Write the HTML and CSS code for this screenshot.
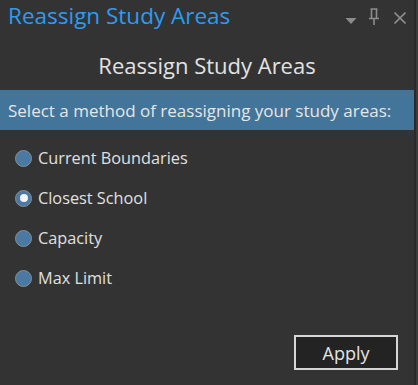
FILE: index.html
```html
<!DOCTYPE html>
<html>
<head>
<meta charset="utf-8">
<link rel="stylesheet" href="styles.css">
</head>
<body>
<div class="pane">
  <div class="main">
    <div class="titlebar">
      <span class="title">Reassign Study Areas</span>
      <div class="tools">
        <svg class="ico tri" width="12" height="12" viewBox="0 0 12 12"><path d="M0.5 4 L11.5 4 L6 10 Z" fill="#8c8c8c"/></svg>
        <svg class="ico pin" width="12" height="17" viewBox="0 0 12 17"><path d="M2.5 1 H9.5 M3.5 1 V10 M8.5 1 V10 M1 10.5 H11 M6 11 V17" stroke="#8c8c8c" stroke-width="1.6" fill="none"/></svg>
        <svg class="ico close" width="12" height="12" viewBox="0 0 12 12"><path d="M0.5 0.5 L11.5 11.5 M11.5 0.5 L0.5 11.5" stroke="#8c8c8c" stroke-width="1.6"/></svg>
      </div>
    </div>
    <div class="heading">Reassign Study Areas</div>
    <div class="band">Select a method of reassigning your study areas:</div>
    <div class="options">
      <label class="opt"><span class="radio"></span>Current Boundaries</label>
      <label class="opt"><span class="radio checked"></span>Closest School</label>
      <label class="opt"><span class="radio"></span>Capacity</label>
      <label class="opt"><span class="radio"></span>Max Limit</label>
    </div>
    <div class="footer"><button class="apply">Apply</button></div>
  </div>
  <div class="edge"></div>
</div>
</body>
</html>
```
FILE: styles.css
```css
html, body {
  margin: 0;
  padding: 0;
  background: #333333;
  font-family: "Open Sans", "Noto Sans", sans-serif;
}
.pane {
  display: flex;
  width: 418px;
  height: 385px;
}
.main {
  flex: 1;
  display: flex;
  flex-direction: column;
}
.edge {
  width: 4px;
  border-left: 2px solid #2a2a2a;
  background: #3c3c3c;
  box-sizing: border-box;
}
.titlebar {
  height: 32px;
  display: flex;
  align-items: center;
  justify-content: space-between;
  padding: 0 0 0 8px;
}
.title {
  color: #2d9bf0;
  font-size: 22.5px;
  line-height: 32px;
}
.tools {
  display: flex;
  align-items: flex-start;
  margin-right: 8px;
  height: 20px;
}
.tri {
  margin-top: 8px;
}
.pin {
  margin-left: 11px;
  margin-top: 2px;
}
.close {
  margin-left: 14px;
  margin-top: 6px;
}
.heading {
  height: 58px;
  box-sizing: border-box;
  padding-top: 8px;
  display: flex;
  align-items: center;
  justify-content: center;
  color: #e2e2e2;
  font-size: 22px;
}
.band {
  height: 40px;
  background: #43749a;
  color: #e6e6e6;
  font-size: 17px;
  display: flex;
  align-items: center;
  padding-left: 8px;
}
.options {
  display: flex;
  flex-direction: column;
  padding-top: 8px;
}
.opt {
  height: 40px;
  display: flex;
  align-items: center;
  color: #e0e0e0;
  font-size: 16.3px;
  padding-left: 15px;
}
.radio {
  width: 17px;
  height: 17px;
  box-sizing: border-box;
  border-radius: 50%;
  border: 1.5px solid #8d8d8d;
  background: #4a7aa3;
  margin-right: 6px;
  position: relative;
}
.radio.checked::after {
  content: "";
  position: absolute;
  left: 50%;
  top: 50%;
  width: 8px;
  height: 8px;
  margin: -4px 0 0 -4px;
  border-radius: 50%;
  background: #f4f4f4;
}
.footer {
  flex: 1;
  display: flex;
  justify-content: flex-end;
  align-items: flex-end;
  padding: 0 16px 15px 0;
}
.apply {
  width: 104px;
  height: 35px;
  background: #232323;
  border: 2px solid #d6d6d6;
  color: #e4e4e4;
  font-family: "Open Sans", "Noto Sans", sans-serif;
  font-size: 18px;
  padding: 0;
}
```
